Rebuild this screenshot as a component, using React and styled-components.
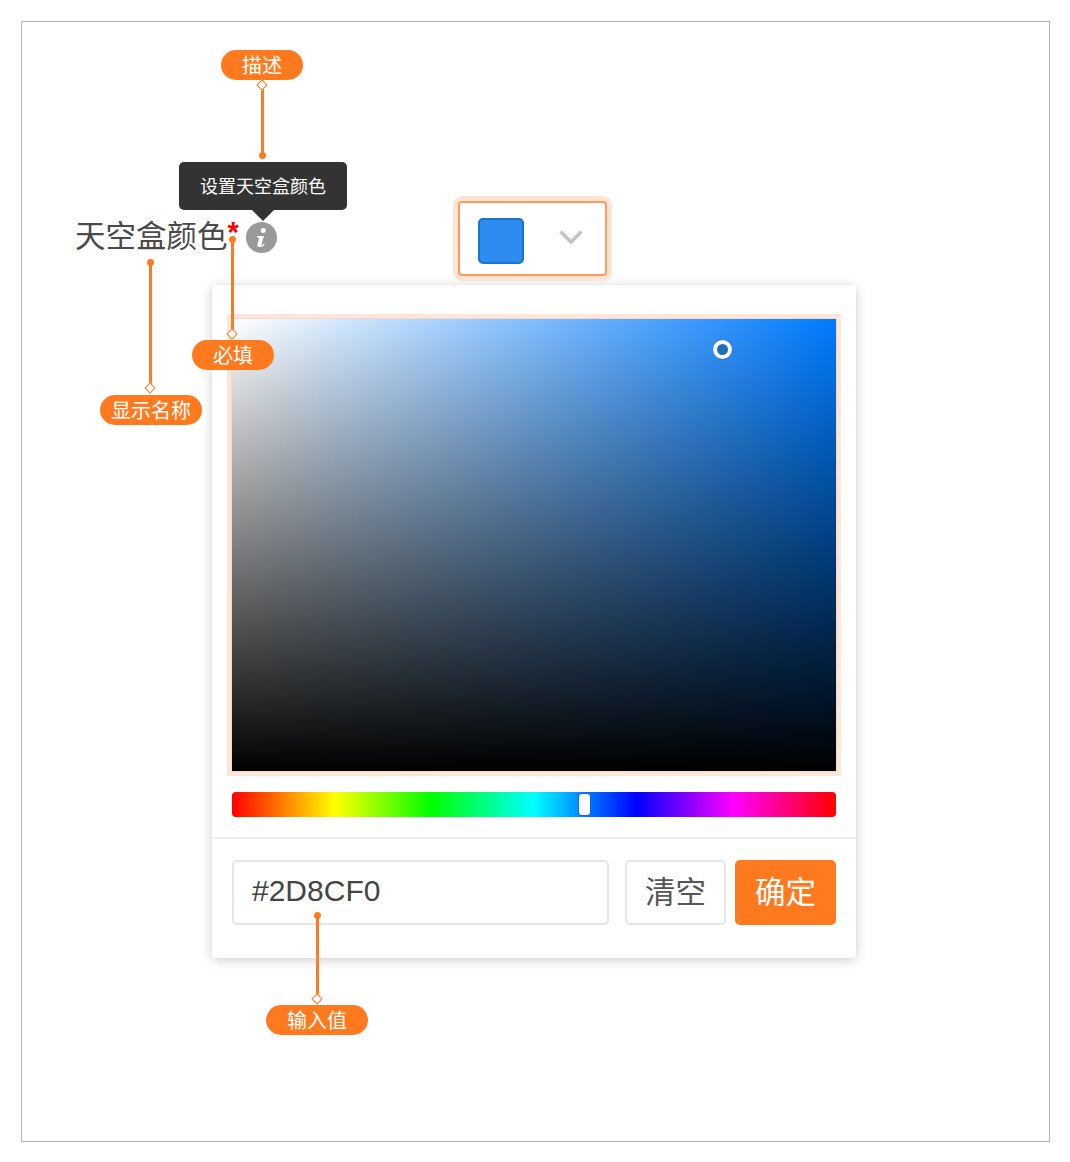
import React from 'react';
import styled, { createGlobalStyle } from 'styled-components';

const ORANGE = '#ff7a1f';
const CJK = `'Noto Sans CJK SC', 'Liberation Sans', sans-serif`;

const GlobalStyle = createGlobalStyle`
  html, body {
    margin: 0;
    background: #fff;
    font-family: ${CJK};
  }
`;

const Frame = styled.div`
  position: relative;
  box-sizing: border-box;
  width: 1029px;
  height: 1121px;
  margin: 21px 0 0 21px;
  padding: 179px 0 0 53px;
  border: 1px solid #b4b4b4;
`;

/* Field row */
const FieldRow = styled.div`
  display: flex;
  align-items: center;
  height: 75px;
`;

const LabelGroup = styled.div`
  position: relative;
  display: flex;
  align-items: center;
  width: 383px;
  height: 50px;
  margin-top: -2px;
`;

const LabelText = styled.span`
  margin-top: -7px;
  font-size: 30.5px;
  line-height: 40px;
  color: #4a4a4a;
`;

const Star = styled.span`
  align-self: flex-start;
  width: 18px;
  margin: 4px 0 0 0;
  font-family: 'Liberation Sans', sans-serif;
  font-size: 29px;
  font-weight: 700;
  line-height: 30px;
  color: #f00;
`;

const Tooltip = styled.div`
  position: absolute;
  left: 104px;
  top: -51px;
  width: 168px;
  height: 48px;
  border-radius: 5px;
  background: #333;
  color: #fff;
  font-size: 18px;
  line-height: 47px;
  text-align: center;

  &::after {
    content: '';
    position: absolute;
    left: 73px;
    top: 48px;
    border-style: solid;
    border-width: 11px 11px 0;
    border-color: #333 transparent transparent;
  }
`;

const Select = styled.div`
  box-sizing: border-box;
  display: flex;
  align-items: center;
  justify-content: space-between;
  width: 149px;
  height: 75px;
  padding: 0 22px 0 18px;
  border: 2px solid #ff9a5c;
  border-radius: 4px;
  box-shadow: 0 0 0 5px #ffe4d4;
`;

const Swatch = styled.div`
  box-sizing: border-box;
  width: 46px;
  height: 46px;
  margin-top: 5px;
  border: 2px solid #1f72cc;
  border-radius: 5px;
  background: ${props => props.$color};
`;

/* Colour picker panel */
const Panel = styled.div`
  width: 644px;
  height: 673px;
  margin: 9px 0 0 137px;
  padding-top: 34px;
  box-sizing: border-box;
  border-radius: 4px;
  background: #fff;
  box-shadow: 0 2px 12px rgba(0, 0, 0, 0.2);
`;

const Palette = styled.div`
  position: relative;
  height: 452px;
  margin: 0 20px;
  box-shadow: 0 0 0 1px #f3d9c6, 0 0 0 5px #ffe6d8;
  background:
    linear-gradient(to top, #000, rgba(0, 0, 0, 0)),
    linear-gradient(to right, #fff, ${props => props.$hue});
`;

const Pointer = styled.div`
  position: absolute;
  left: 481px;
  top: 21px;
  box-sizing: border-box;
  width: 19px;
  height: 19px;
  border: 4px solid #fff;
  border-radius: 50%;
  background: ${props => props.$color};
  box-shadow: 0 0 1px rgba(0, 0, 0, 0.5);
`;

const HueBar = styled.div`
  position: relative;
  height: 25px;
  margin: 21px 20px 0;
  border-radius: 4px;
  background: linear-gradient(
    to right,
    #f00 0%,
    #ff0 17%,
    #0f0 33%,
    #0ff 50%,
    #00f 67%,
    #f0f 83%,
    #f00 100%
  );
`;

const HueThumb = styled.div`
  position: absolute;
  left: 347px;
  top: 2px;
  box-sizing: border-box;
  width: 11px;
  height: 21px;
  border-radius: 3px;
  background: #fff;
  box-shadow: 0 0 1px 1px rgba(30, 90, 190, 0.6);
`;

const Footer = styled.div`
  display: flex;
  margin-top: 20px;
  padding: 21px 20px 0;
  border-top: 2px solid #eeeff1;
`;

const HexInput = styled.div`
  box-sizing: border-box;
  width: 377px;
  height: 65px;
  padding-left: 18px;
  border: 2px solid #e6e6e6;
  border-radius: 5px;
  font-family: 'Liberation Sans', sans-serif;
  font-size: 30px;
  line-height: 57px;
  color: #444;
`;

const Button = styled.div`
  box-sizing: border-box;
  width: 101px;
  height: 65px;
  margin-left: ${props => props.$gap}px;
  border: 2px solid ${props => (props.$primary ? ORANGE : '#e6e6e6')};
  border-radius: 5px;
  background: ${props => (props.$primary ? ORANGE : '#fff')};
  color: ${props => (props.$primary ? '#fff' : '#555')};
  font-size: 30.5px;
  line-height: 56px;
  text-align: center;
`;

/* Annotations laid over the form */
const Callout = styled.div`
  position: absolute;
  left: ${props => props.$x}px;
  top: ${props => props.$y}px;
  display: flex;
  flex-direction: ${props => (props.$pillFirst ? 'column' : 'column-reverse')};
  align-items: center;
  transform: translateX(-50%);
`;

const Pill = styled.div`
  height: 30px;
  padding: 0 ${props => props.$pad}px;
  border-radius: 15px;
  background: ${ORANGE};
  color: #fff;
  font-size: 20px;
  line-height: 29px;
  white-space: nowrap;
`;

const Leader = styled.div`
  position: relative;
  left: ${props => props.$shift || 0}px;
  width: 3px;
  height: ${props => props.$length}px;
  margin: ${props => (props.$pillFirst ? `${props.$gap}px 0 0` : `0 0 ${props.$gap}px`)};
  background: ${ORANGE};
`;

const Dot = styled.i`
  position: absolute;
  left: -2px;
  ${props => (props.$pillFirst ? 'bottom' : 'top')}: -3.5px;
  width: 7px;
  height: 7px;
  border-radius: 50%;
  background: ${ORANGE};
`;

const Diamond = styled.i`
  position: absolute;
  left: -2.5px;
  ${props => (props.$pillFirst ? 'top' : 'bottom')}: -4px;
  box-sizing: border-box;
  width: 8px;
  height: 8px;
  border: 1px solid ${ORANGE};
  background: #fff;
  transform: rotate(45deg);
`;

const InfoIcon = () => (
  <svg width="31" height="31" viewBox="0 0 31 31">
    <circle cx="15.5" cy="15.5" r="15.5" fill="#999" />
    <circle cx="17.2" cy="8.6" r="2.5" fill="#fff" />
    <path
      d="M11.5 14h6.4l-2.4 8.2c-.2.7.4 1 1 .6l1.7-1.2.5.8c-1.4 1.6-3 2.6-5 2.6-1.9 0-2.8-1-2.3-2.7l1.9-6.5-2.2-.3z"
      fill="#fff"
    />
  </svg>
);

const Chevron = () => (
  <svg width="24" height="14" viewBox="0 0 24 14" style={{ marginTop: -3 }}>
    <path d="M1.5 1.5L12 12 22.5 1.5" fill="none" stroke="#c4c4c4" strokeWidth="3.5" />
  </svg>
);

const callouts = [
  { label: '描述', x: 240, y: 28, length: 70, gap: 5, pad: 21, pillFirst: true },
  { label: '必填', x: 211, y: 217, length: 95, gap: 6, pad: 21, shift: -1 },
  { label: '显示名称', x: 129, y: 240, length: 126, gap: 7, pad: 11, shift: -1 },
  { label: '输入值', x: 295, y: 893, length: 84, gap: 6, pad: 21 }
];

export default function App() {
  return (
    <Frame>
      <GlobalStyle />
      <FieldRow>
        <LabelGroup>
          <Tooltip>设置天空盒颜色</Tooltip>
          <LabelText>天空盒颜色</LabelText>
          <Star>*</Star>
          <InfoIcon />
        </LabelGroup>
        <Select>
          <Swatch $color="#2d8cf0" />
          <Chevron />
        </Select>
      </FieldRow>
      <Panel>
        <Palette $hue="#007bff">
          <Pointer $color="#1d6fb8" />
        </Palette>
        <HueBar>
          <HueThumb />
        </HueBar>
        <Footer>
          <HexInput>#2D8CF0</HexInput>
          <Button $gap={16}>清空</Button>
          <Button $gap={9} $primary>确定</Button>
        </Footer>
      </Panel>
      {callouts.map(c => (
        <Callout key={c.label} $x={c.x} $y={c.y} $pillFirst={c.pillFirst}>
          <Pill $pad={c.pad}>{c.label}</Pill>
          <Leader $length={c.length} $gap={c.gap} $pillFirst={c.pillFirst} $shift={c.shift}>
            <Dot $pillFirst={c.pillFirst} />
            <Diamond $pillFirst={c.pillFirst} />
          </Leader>
        </Callout>
      ))}
    </Frame>
  );
}
